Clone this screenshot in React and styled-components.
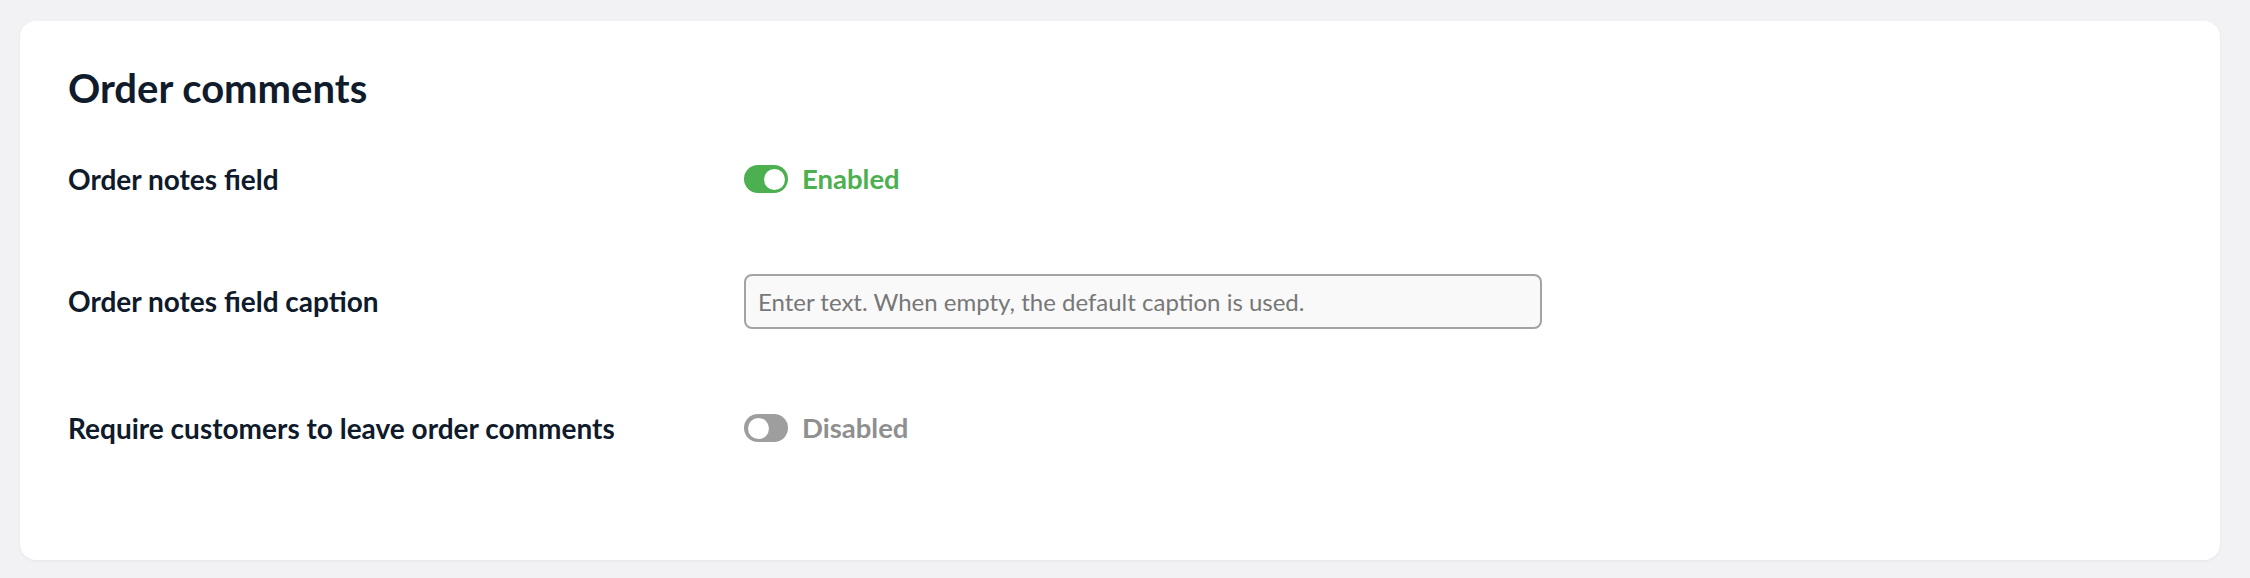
import styled, { createGlobalStyle } from 'styled-components'

const GlobalStyle = createGlobalStyle`
    body {
        margin: 0;
        background: #f2f1f4;
        font-family: Lato, "Open Sans", sans-serif;
    }
`

const PageStyled = styled.div`
    padding: 21px 30px 18px 20px;
`

const CardStyled = styled.section`
    box-sizing: border-box;
    height: 539px;
    padding: 43px 48px 0;
    background: #ffffff;
    border-radius: 16px;
    box-shadow: 0 1px 3px rgba(20, 20, 40, 0.05);
`

const TitleStyled = styled.h2`
    margin: 0 0 39px;
    font-size: 40px;
    line-height: 48px;
    font-weight: 700;
    color: #101c2c;
`

const RowStyled = styled.div`
    display: grid;
    grid-template-columns: 676px 1fr;
    align-items: center;
    height: 56px;
    margin-top: ${(p) => p.$space || 0}px;
`

const LabelStyled = styled.div`
    font-size: 28px;
    line-height: 32px;
    font-weight: 700;
    color: #0f1a2b;
`

const SwitchRowStyled = styled.label`
    display: flex;
    align-items: center;
    gap: 14px;
`

const TrackStyled = styled.span`
    box-sizing: border-box;
    display: flex;
    align-items: center;
    justify-content: ${(p) => (p.$on ? 'flex-end' : 'flex-start')};
    width: 44px;
    height: 28px;
    padding: 0 3.5px;
    border-radius: 14px;
    background: ${(p) => (p.$on ? '#4caf50' : '#9e9e9e')};
`

const KnobStyled = styled.span`
    width: 21px;
    height: 21px;
    border-radius: 50%;
    background: #ffffff;
`

const StatusStyled = styled.span`
    font-size: 27.5px;
    line-height: 32px;
    font-weight: 700;
    color: ${(p) => (p.$on ? '#4caf50' : '#8f8f8f')};
`

const InputStyled = styled.input`
    box-sizing: border-box;
    width: 798px;
    height: 55px;
    padding: 0 12px;
    border: 2px solid #a3a3a3;
    border-radius: 8px;
    background: #f9f9f9;
    font-family: Lato, "Open Sans", sans-serif;
    font-size: 24px;
    color: #333;
    outline: none;

    &::placeholder {
        color: #777777;
    }
`

function Switch({ on }) {
    return (
        <SwitchRowStyled>
            <TrackStyled $on={on}>
                <KnobStyled />
            </TrackStyled>
            <StatusStyled $on={on}>{on ? 'Enabled' : 'Disabled'}</StatusStyled>
        </SwitchRowStyled>
    )
}

export default function App() {
    return (
        <PageStyled>
            <GlobalStyle />
            <CardStyled>
                <TitleStyled>Order comments</TitleStyled>
                <RowStyled>
                    <LabelStyled>Order notes field</LabelStyled>
                    <Switch on />
                </RowStyled>
                <RowStyled $space={66}>
                    <LabelStyled>Order notes field caption</LabelStyled>
                    <InputStyled placeholder="Enter text. When empty, the default caption is used." />
                </RowStyled>
                <RowStyled $space={71}>
                    <LabelStyled>Require customers to leave order comments</LabelStyled>
                    <Switch on={false} />
                </RowStyled>
            </CardStyled>
        </PageStyled>
    )
}
